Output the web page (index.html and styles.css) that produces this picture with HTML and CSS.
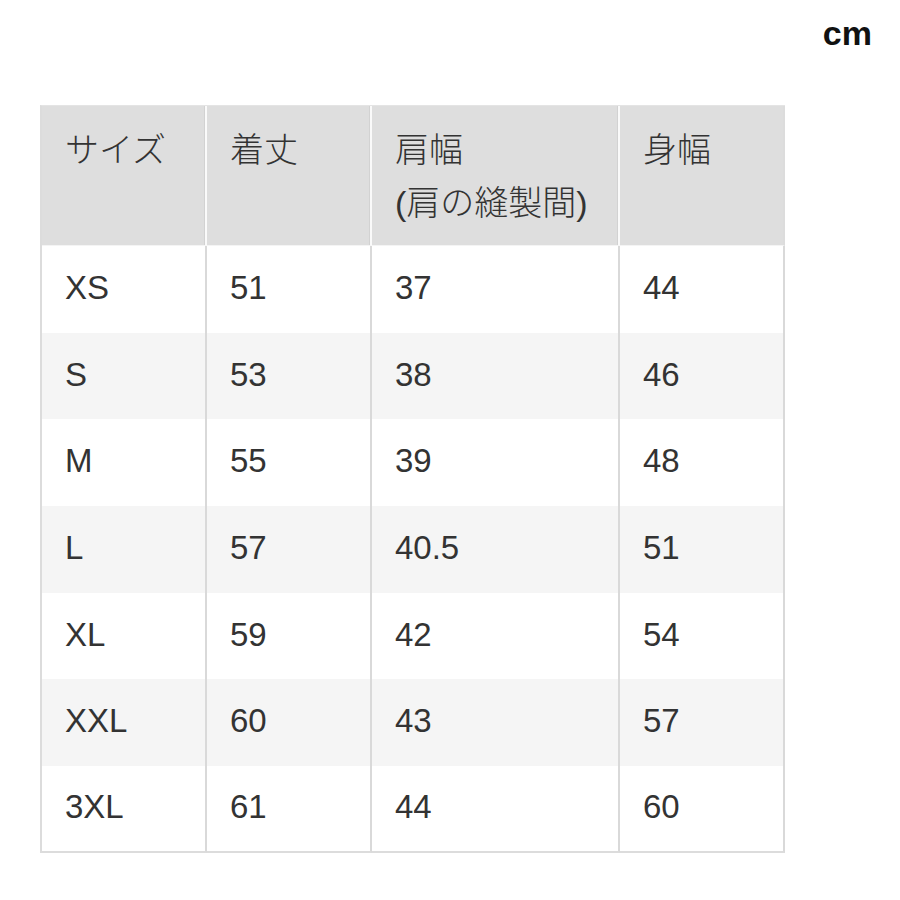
FILE: index.html
```html
<!DOCTYPE html>
<html lang="ja">
<head>
<meta charset="utf-8">
<link rel="stylesheet" href="styles.css">
</head>
<body>
<div class="unit">cm</div>
<table class="size-table">
  <colgroup>
    <col class="c1"><col class="c2"><col class="c3"><col class="c4">
  </colgroup>
  <thead>
    <tr>
      <th>サイズ</th>
      <th>着丈</th>
      <th>肩幅<br>(肩の縫製間)</th>
      <th>身幅</th>
    </tr>
  </thead>
  <tbody>
    <tr><td>XS</td><td>51</td><td>37</td><td>44</td></tr>
    <tr><td>S</td><td>53</td><td>38</td><td>46</td></tr>
    <tr><td>M</td><td>55</td><td>39</td><td>48</td></tr>
    <tr><td>L</td><td>57</td><td>40.5</td><td>51</td></tr>
    <tr><td>XL</td><td>59</td><td>42</td><td>54</td></tr>
    <tr><td>XXL</td><td>60</td><td>43</td><td>57</td></tr>
    <tr><td>3XL</td><td>61</td><td>44</td><td>60</td></tr>
  </tbody>
</table>
</body>
</html>
```
FILE: styles.css
```css
html, body {
  margin: 0;
  padding: 0;
  background: #fff;
}
body {
  font-family: "Liberation Sans", "Noto Sans CJK JP", sans-serif;
  color: #333;
}
.unit {
  height: 66px;
  line-height: 66px;
  text-align: right;
  padding-right: 28px;
  font-family: "Liberation Sans", "Noto Sans CJK JP", sans-serif;
  font-weight: bold;
  font-size: 34px;
  color: #111;
}
.size-table {
  margin: 39px 0 0 40px;
  border-collapse: separate;
  border-spacing: 0;
  table-layout: fixed;
  width: 743px;
  border-left: 2px solid #dcdcdc;
  border-top: 1px solid #e4e4e4;
}
.c1, .c2, .c4 { width: 165px; }
.c3 { width: 248px; }
.size-table th,
.size-table td {
  text-align: left;
  font-weight: 300;
  font-size: 33px;
  padding: 0 0 0 23px;
  box-sizing: border-box;
}
.size-table th {
  height: 140px;
  vertical-align: top;
  padding-top: 18px;
  line-height: 53px;
  font-size: 34px;
  background: #dedede;
  border-right: 2px solid #fafafa;
  box-shadow: inset -1px 0 0 #d2d2d2;
  border-bottom: 1px solid #f4f4f4;
}
.size-table th:last-child {
  border-right: 2px solid #dcdcdc;
  box-shadow: none;
}
.size-table td {
  height: 86.7px;
  vertical-align: middle;
  line-height: 1;
  padding-bottom: 4px;
  border-right: 2px solid #d9d9d9;
}
.size-table tbody tr:nth-child(even) td {
  background: #f5f5f5;
}
.size-table tbody tr:last-child td {
  border-bottom: 2px solid #dcdcdc;
}
```
